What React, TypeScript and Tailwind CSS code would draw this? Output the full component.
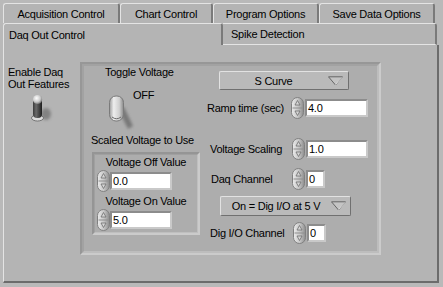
import React from "react";

const tabsBack = [
  { label: "Acquisition Control", cls: "w-[117px]" },
  { label: "Chart Control", cls: "w-[93px]" },
  { label: "Program Options", cls: "w-[106px]" },
  { label: "Save Data Options", cls: "w-[116px]" },
];

function Spinner() {
  return (
    <svg width="13" height="22" viewBox="0 0 13 22" className="shrink-0">
      <defs>
        <linearGradient id="spin" x1="0" x2="1" y1="0" y2="0">
          <stop offset="0" stopColor="#ececec" />
          <stop offset="0.55" stopColor="#c4c4c4" />
          <stop offset="1" stopColor="#8c8c8c" />
        </linearGradient>
      </defs>
      <rect x="0.5" y="0.5" width="12" height="21" rx="6" fill="url(#spin)" stroke="#808080" />
      <line x1="1.5" y1="11" x2="11.5" y2="11" stroke="#8e8e8e" />
      <path d="M6.5 3.5 L9 8 H4 Z" fill="#d6d6d6" stroke="#6e6e6e" strokeWidth="0.8" />
      <path d="M6.5 18.5 L9 14 H4 Z" fill="#d6d6d6" stroke="#6e6e6e" strokeWidth="0.8" />
    </svg>
  );
}

function Field({ value, w }: { value: string; w: string }) {
  return (
    <div
      className={`${w} h-[18px] bg-white border-2 border-t-[#8c8c8c] border-l-[#8c8c8c] border-r-[#c9c9c9] border-b-[#c9c9c9] pl-[1px] leading-[14px] text-[11px]`}
    >
      {value}
    </div>
  );
}

function Triangle() {
  return (
    <svg width="15" height="10" viewBox="0 0 15 10" className="shrink-0">
      <path d="M0.5 0.8 H14.5 L7.5 9 Z" fill="#c4c4c4" stroke="#5c5c5c" strokeWidth="0.9" />
      <path d="M14 1.3 L7.5 8.6" stroke="#eeeeee" strokeWidth="0.8" />
    </svg>
  );
}

function Ring({ label, cls, textCls }: { label: string; cls: string; textCls: string }) {
  return (
    <div
      className={`${cls} flex items-center bg-[#bababa] border border-t-[#e2e2e2] border-l-[#e2e2e2] border-r-[#707070] border-b-[#707070] rounded-[2px]`}
    >
      <span className={`${textCls} text-center leading-[12px]`}>{label}</span>
      <Triangle />
    </div>
  );
}

function NumRow({
  label,
  labelCls,
  value,
  fieldW,
  cls,
}: {
  label: string;
  labelCls: string;
  value: string;
  fieldW: string;
  cls: string;
}) {
  return (
    <div className={`${cls} flex items-center h-[22px]`}>
      <span className={`${labelCls} leading-[12px] whitespace-nowrap`}>{label}</span>
      <Spinner />
      <div className="ml-[1px]">
        <Field value={value} w={fieldW} />
      </div>
    </div>
  );
}

function EnableSwitch() {
  return (
    <svg width="26" height="30" viewBox="0 0 26 30">
      <defs>
        <filter id="blur1" x="-50%" y="-50%" width="200%" height="200%">
          <feGaussianBlur stdDeviation="1.6" />
        </filter>
        <radialGradient id="knob1" cx="0.4" cy="0.35" r="0.7">
          <stop offset="0" stopColor="#ffffff" />
          <stop offset="0.6" stopColor="#c8c8c8" />
          <stop offset="1" stopColor="#6a6a6a" />
        </radialGradient>
        <linearGradient id="stem1" x1="0" x2="1">
          <stop offset="0" stopColor="#3a3a3a" />
          <stop offset="0.35" stopColor="#6a6a6a" />
          <stop offset="1" stopColor="#1e1e1e" />
        </linearGradient>
      </defs>
      <ellipse cx="16" cy="20" rx="5" ry="6" fill="#5a5a5a" opacity="0.55" filter="url(#blur1)" />
      <ellipse cx="7.5" cy="24" rx="6" ry="3" fill="#dcdcdc" stroke="#606060" strokeWidth="0.8" />
      <rect x="3" y="5" width="9" height="19" rx="4" fill="url(#stem1)" />
      <ellipse cx="7.5" cy="5.5" rx="4.6" ry="4.6" fill="url(#knob1)" />
    </svg>
  );
}

function VoltSwitch() {
  return (
    <svg width="26" height="38" viewBox="0 0 26 38">
      <defs>
        <filter id="blur2" x="-50%" y="-50%" width="200%" height="200%">
          <feGaussianBlur stdDeviation="1.5" />
        </filter>
        <linearGradient id="pill2" x1="0" x2="1">
          <stop offset="0" stopColor="#9c9c9c" />
          <stop offset="0.3" stopColor="#eeeeee" />
          <stop offset="0.7" stopColor="#cfcfcf" />
          <stop offset="1" stopColor="#8a8a8a" />
        </linearGradient>
      </defs>
      <path d="M9 14 L15 12 L24 31 L19 34 Z" fill="#555555" opacity="0.6" filter="url(#blur2)" />
      <rect x="0.5" y="1" width="14" height="25" rx="6.5" fill="url(#pill2)" stroke="#7a7a7a" />
      <path d="M3 22 Q7.5 25.5 12 22" fill="none" stroke="#6a6a6a" strokeWidth="1" />
    </svg>
  );
}

export default function App() {
  return (
    <div className="w-[443px] h-[287px] overflow-hidden bg-[#b9b9b9] font-['Liberation_Sans',Arial,sans-serif] text-[11px] tracking-[-0.25px] text-black">
      {/* back row of tabs */}
      <div className="flex h-[20px] mt-[3px] pl-[3px]">
        {tabsBack.map((t) => (
          <div
            key={t.label}
            className={`${t.cls} h-full flex items-center justify-center bg-[#b4b4b4] border-t border-l border-t-[#e4e4e4] border-l-[#e4e4e4] border-r-2 border-r-[#7a7a7a] rounded-t-[3px] leading-[12px] whitespace-nowrap`}
          >
            {t.label}
          </div>
        ))}
      </div>
      {/* front row of tabs */}
      <div className="flex h-[22px] pl-[3px]">
        <div className="w-[220px] h-full flex items-center pl-[5px] bg-[#b4b4b4] border-t border-l border-t-[#e4e4e4] border-l-[#e4e4e4] border-r-2 border-r-[#7a7a7a] rounded-t-[3px] leading-[12px]">
          Daq Out Control
        </div>
        <div className="w-[214px] h-full flex items-center pl-[8px] bg-[#b4b4b4] border-t border-b border-t-[#e4e4e4] border-b-[#e4e4e4] border-r-2 border-r-[#7a7a7a] rounded-tr-[3px] leading-[12px]">
          Spike Detection
        </div>
      </div>
      {/* tab page */}
      <div className="ml-[3px] w-[436px] h-[238px] flex bg-[#b4b4b4] border-l border-l-[#e4e4e4] border-r-2 border-r-[#6c6c6c] border-b-2 border-b-[#6c6c6c]">
        <div className="w-[76px] shrink-0 pl-[4px] pt-[21px]">
          <div className="leading-[12px]">Enable Daq</div>
          <div className="leading-[12px]">Out Features</div>
          <div className="ml-[22px] mt-[4px]">
            <EnableSwitch />
          </div>
        </div>

        <div className="mt-[17px] w-[301px] h-[193px] border-2 border-t-[#979797] border-l-[#979797] border-r-[#cbcbcb] border-b-[#cbcbcb]">
          <div className="w-full h-full flex bg-[#adadad] border-2 border-t-[#a2a2a2] border-l-[#a2a2a2] border-r-[#bdbdbd] border-b-[#bdbdbd]">
            {/* left column */}
            <div className="w-[121px] shrink-0">
              <div className="pl-[21px] leading-[12px]">Toggle Voltage</div>
              <div className="flex items-start pl-[25px] mt-[11px]">
                <div className="mt-[6px]">
                  <VoltSwitch />
                </div>
                <span className="leading-[12px] -ml-[2px]">OFF</span>
              </div>
              <div className="pl-[7px] mt-[1px] leading-[12px] whitespace-nowrap">Scaled Voltage to Use</div>
              <div className="ml-[8px] mt-[6px] w-[108px] h-[83px] border-2 border-t-[#959595] border-l-[#959595] border-r-[#cbcbcb] border-b-[#cbcbcb]">
                <div className="w-full h-full bg-[#adadad] border border-t-[#a0a0a0] border-l-[#a0a0a0] border-r-[#bfbfbf] border-b-[#bfbfbf] pt-[1px]">
                  <div className="text-center leading-[12px]">Voltage Off Value</div>
                  <div className="flex items-center pl-[2px] mt-[2px] h-[22px]">
                    <Spinner />
                    <Field value="0.0" w="w-[62px]" />
                  </div>
                  <div className="text-center leading-[12px] mt-[3px]">Voltage On Value</div>
                  <div className="flex items-center pl-[2px] mt-[2px] h-[22px]">
                    <Spinner />
                    <Field value="5.0" w="w-[62px]" />
                  </div>
                </div>
              </div>
            </div>

            {/* right column */}
            <div className="flex-1">
              <div className="ml-[14px] mt-[5px]">
                <Ring label="S Curve" cls="w-[130px] h-[19px]" textCls="w-[107px] mr-[1px]" />
              </div>
              <NumRow cls="mt-[7px]" label="Ramp time (sec)" labelCls="w-[86px] pl-[2px]" value="4.0" fieldW="w-[63px]" />
              <NumRow cls="mt-[19px]" label="Voltage Scaling" labelCls="w-[87px] pl-[5px]" value="1.0" fieldW="w-[62px]" />
              <NumRow cls="mt-[8px]" label="Daq Channel" labelCls="w-[87px] pl-[6px]" value="0" fieldW="w-[19px]" />
              <div className="ml-[15px] mt-[6px]">
                <Ring label="On = Dig I/O at 5 V" cls="w-[131px] h-[20px]" textCls="w-[110px]" />
              </div>
              <NumRow cls="mt-[6px]" label="Dig I/O Channel" labelCls="w-[88px] pl-[5px]" value="0" fieldW="w-[19px]" />
            </div>
          </div>
        </div>
      </div>
    </div>
  );
}
